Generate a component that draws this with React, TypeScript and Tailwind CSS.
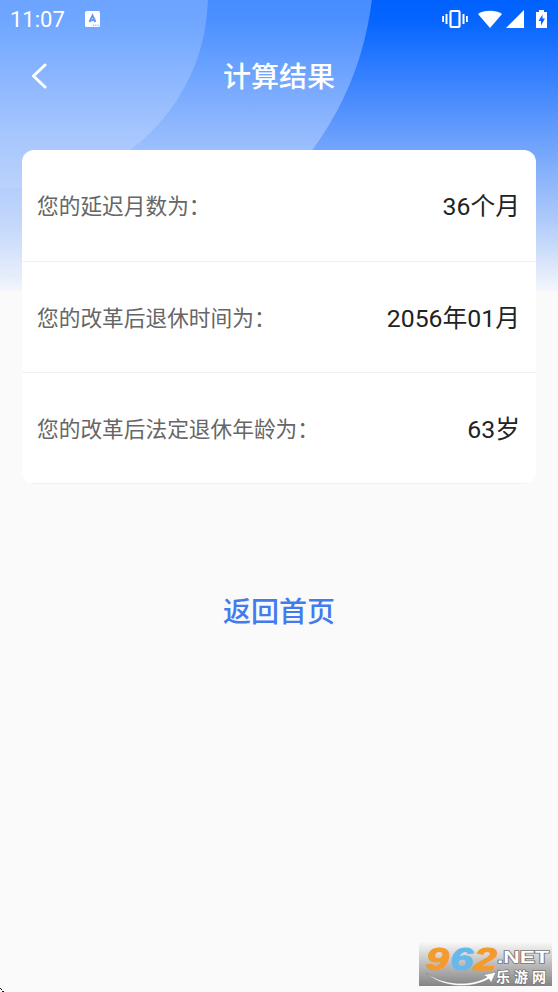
import React from 'react';

const results = [
  { label: '您的延迟月数为：', value: '36个月' },
  { label: '您的改革后退休时间为：', value: '2056年01月' },
  { label: '您的改革后法定退休年龄为：', value: '63岁' },
];

const HeaderBackground: React.FC = () => (
  <svg className="absolute left-0 top-0" width="558" height="291" viewBox="0 0 558 291">
    <defs>
      <linearGradient id="sky" x1="0" y1="0" x2="0" y2="1">
        <stop offset="0" stopColor="#0061ff" />
        <stop offset="0.07" stopColor="#0665ff" />
        <stop offset="0.25" stopColor="#337fff" />
        <stop offset="0.5" stopColor="#70a3fc" />
        <stop offset="0.75" stopColor="#adc9fa" />
        <stop offset="1" stopColor="#f4f6fb" />
      </linearGradient>
      <linearGradient id="ring" gradientUnits="userSpaceOnUse" x1="0" y1="0" x2="0" y2="277">
        <stop offset="0" stopColor="#fff" stopOpacity="0.28" />
        <stop offset="0.7" stopColor="#fff" stopOpacity="0.3" />
        <stop offset="1" stopColor="#fff" stopOpacity="0.1" />
      </linearGradient>
      <linearGradient id="disc" gradientUnits="userSpaceOnUse" x1="0" y1="0" x2="0" y2="188">
        <stop offset="0" stopColor="#fff" stopOpacity="0.2" />
        <stop offset="0.7" stopColor="#fff" stopOpacity="0.18" />
        <stop offset="1" stopColor="#fff" stopOpacity="0.1" />
      </linearGradient>
    </defs>
    <rect width="558" height="291" fill="url(#sky)" />
    <circle cx="60" cy="-37" r="314" fill="url(#ring)" />
    <circle cx="15" cy="-5" r="193" fill="url(#disc)" />
  </svg>
);

const StatusBar: React.FC = () => (
  <div className="flex h-[38px] items-center justify-between px-[10px] text-white">
    <div className="flex items-center">
      <span className="w-[75px] pt-0.5 font-[Roboto] text-[22px] leading-none">11:07</span>
      <svg width="15" height="16" viewBox="0 0 15 16">
        <rect width="15" height="16" rx="1.5" fill="#fff" />
        <path d="M4.500 11 7.500 4.500 10.500 11M5.500 9.300h4" fill="none" stroke="#5f99f5" strokeWidth="1.900" />
        <path d="M8 14.200h6" stroke="#6ea4ff" strokeWidth="1" strokeDasharray="1.2 1" />
      </svg>
    </div>
    <svg width="106" height="22" viewBox="0 0 106 22" fill="#fff">
      <rect x="8.500" y="3" width="9" height="16" rx="1" fill="none" stroke="#fff" strokeWidth="2.200" />
      <path d="M.2 8h1.800v6H.2zM3.500 6h2v10h-2zM20.500 6h2v10h-2zM24 8h1.800v6H24z" />
      <path d="M36 6C42 1.600 54 1.600 60 6L48 20z" />
      <path d="M64 20 82 2v18z" />
      <path d="M94 4h3V2h5v2h3v16H94z" />
      <path d="M100.500 6.500 96.500 13H99v4.500l4-7h-2.500z" fill="#0665ff" />
    </svg>
  </div>
);

const Watermark: React.FC = () => (
  <svg className="absolute left-[419px] top-[942px]" width="133" height="44" viewBox="0 0 133 44">
    <defs>
      <linearGradient id="plate" x1="0" y1="0" x2="0" y2="1">
        <stop offset="0" stopColor="#f8f8f8" />
        <stop offset="0.5" stopColor="#bdbdbd" />
        <stop offset="1" stopColor="#858585" />
      </linearGradient>
    </defs>
    <rect width="133" height="44" fill="url(#plate)" />
    <path d="M7 31C26 44 53 44 68 35l-4-2 13-3-5 11-2-4C50 48 22 45 7 31z" fill="#fff" stroke="#777" strokeWidth=".5" />
    <g fontFamily="Liberation Sans, sans-serif" fontWeight="bold" fontStyle="italic" fontSize="31" strokeWidth="1" strokeLinejoin="round">
      <text x="7" y="28.300" fill="#f59a2d" stroke="#f59a2d" textLength="23" lengthAdjust="spacingAndGlyphs">9</text>
      <text x="31" y="28.300" fill="#68b8ea" stroke="#68b8ea" textLength="23" lengthAdjust="spacingAndGlyphs">6</text>
      <text x="55" y="28.300" fill="#f59a2d" stroke="#f59a2d" textLength="23" lengthAdjust="spacingAndGlyphs">2</text>
    </g>
    <g fill="#fff" stroke="#777" strokeWidth="1.500" paintOrder="stroke" fontWeight="bold">
      <text x="78" y="20.500" fontFamily="Liberation Sans, sans-serif" fontSize="16" textLength="52" lengthAdjust="spacingAndGlyphs">.NET</text>
      <text x="77" y="39.500" fontFamily="Noto Sans CJK SC, sans-serif" fontSize="14" textLength="50">乐游网</text>
    </g>
  </svg>
);

export default function App() {
  return (
    <div className="relative h-[992px] w-[558px] overflow-hidden bg-[#fafafa] font-[Roboto,'Noto_Sans_CJK_SC',sans-serif]">
      <HeaderBackground />
      <div className="relative">
        <StatusBar />
        <header className="grid h-[76px] grid-cols-[80px_1fr_80px] items-center text-white">
          <button className="pl-[31px]" aria-label="返回">
            <svg width="18" height="26" viewBox="0 0 18 26" fill="none" stroke="#fff" strokeWidth="3" strokeLinecap="round" strokeLinejoin="round">
              <path d="M14 2 2.500 13 14 24" />
            </svg>
          </button>
          <h1 className="pt-1 text-center text-[28px] font-medium leading-none">计算结果</h1>
        </header>
        <main className="mx-[22px] mt-[36px] overflow-hidden rounded-[12px] bg-white">
          {results.map((item) => (
            <div key={item.label} className="flex h-[111px] items-center justify-between border-b border-[#f1f1f1] pl-[15px] pr-[16px] pt-[3px] first:h-[112px]">
              <span className="pt-px text-[21.700px] text-[#666]">{item.label}</span>
              <span className="text-[24.800px] text-[#222]">{item.value}</span>
            </div>
          ))}
        </main>
        <button className="mt-[108px] block w-full text-center text-[28px] font-medium leading-[42px] text-[#427bed]">返回首页</button>
      </div>
      <Watermark />
      <svg className="absolute bottom-0 left-0" width="5" height="5" viewBox="0 0 5 5" fill="#111">
        <path d="M0 1h1v1H0zM1 2h1v1H1zM2 4h2v1H2z" />
      </svg>
    </div>
  );
}
